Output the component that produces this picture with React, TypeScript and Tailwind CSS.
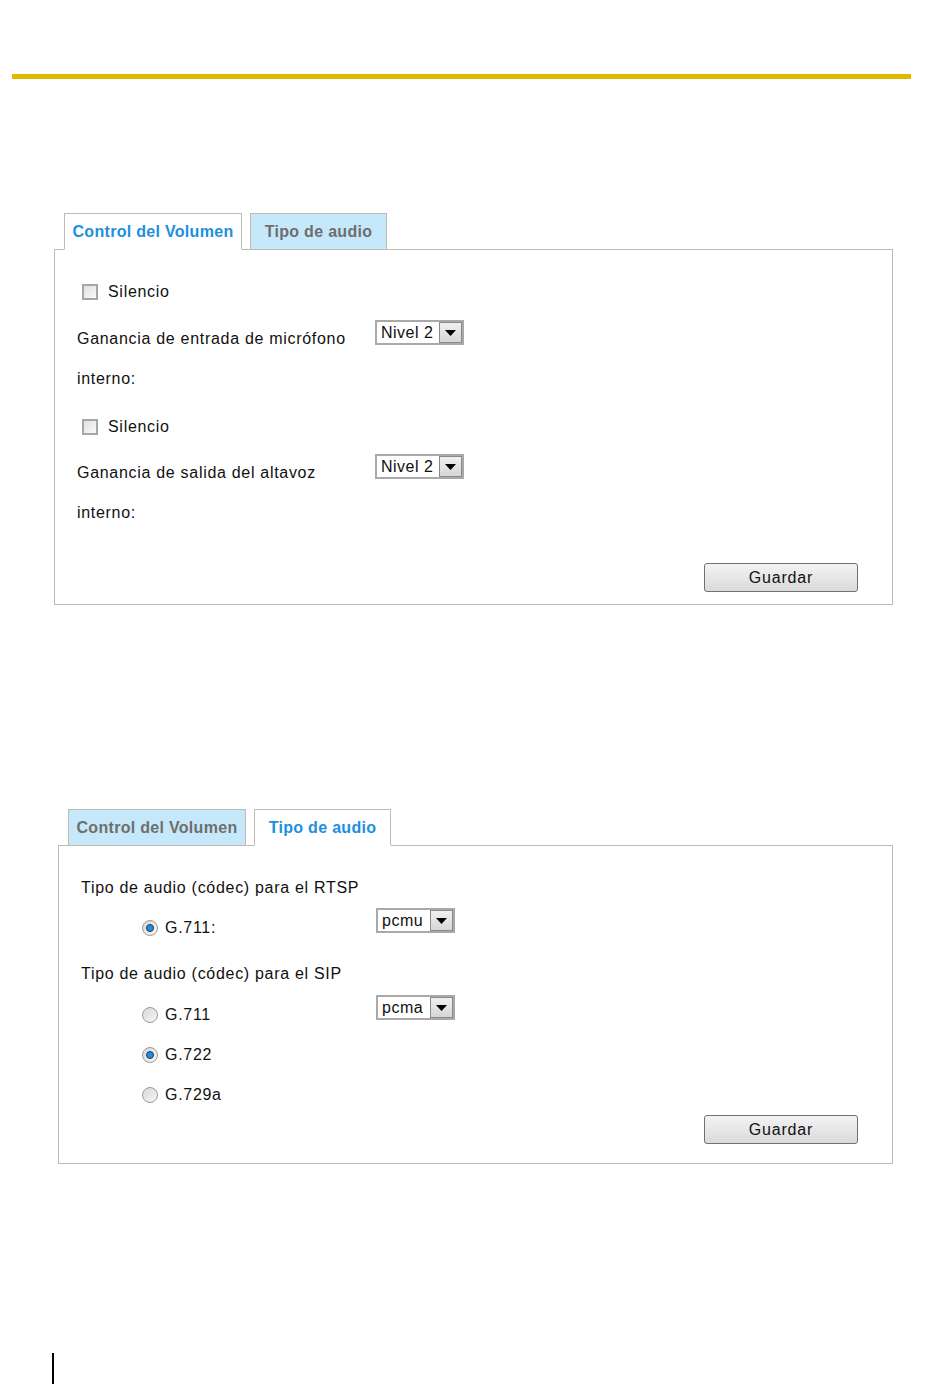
import React from 'react'

const font = { fontFamily: '"Liberation Sans", Arial, sans-serif' }

function Tabs({ active }: { active: 0 | 1 }) {
  const labels = ['Control del Volumen', 'Tipo de audio']
  const widths = [178, 137]
  return (
    <div className="relative z-10 -mb-px flex gap-[8px] pl-[10px]">
      {labels.map((label, i) => (
        <div
          key={label}
          style={{ width: widths[i] }}
          className={
            'flex h-[37px] items-center justify-center border border-[#bfbbb1] text-[16px] font-bold tracking-[0.3px] ' +
            (i === active
              ? 'border-b-white bg-white text-[#1c8fe0]'
              : 'border-b-[#bfbbb1] bg-[#c5e9fb] text-[#6e6e6e]')
          }
        >
          {label}
        </div>
      ))}
    </div>
  )
}

function Checkbox() {
  return (
    <span className="inline-block h-[16px] w-[16px] border-2 border-[#a6a6a6] bg-gradient-to-br from-[#e0e0e0] to-[#fafafa]" />
  )
}

function Radio({ checked }: { checked?: boolean }) {
  return (
    <span className="flex h-[16px] w-[16px] items-center justify-center rounded-full border border-[#9a9a9a] bg-gradient-to-br from-[#d6d6d6] to-[#f8f8f8]">
      {checked && (
        <span className="h-[8px] w-[8px] rounded-full border border-[#1d3c5c] bg-[#2a8ad8]" />
      )}
    </span>
  )
}

function Select({ value, width }: { value: string; width: number }) {
  return (
    <div
      style={{ width }}
      className="flex h-[25px] items-stretch border-2 border-[#a9a9a9] bg-white"
    >
      <span className="flex flex-1 items-center pl-[4px] text-[16px] leading-none tracking-[0.5px] text-[#111]">
        {value}
      </span>
      <span className="flex w-[23px] items-center justify-center border border-[#8a8a8a] bg-gradient-to-b from-[#f0f0f0] to-[#d6d6d6]">
        <svg width="11" height="6" viewBox="0 0 11 6">
          <path d="M0 0 H11 L5.5 6 Z" fill="#000" />
        </svg>
      </span>
    </div>
  )
}

function SaveButton() {
  return (
    <div className="flex justify-end pr-[12px]">
      <button className="h-[29px] w-[154px] rounded-[3px] border border-[#707070] bg-gradient-to-b from-[#f3f3f3] to-[#dadada] text-[16px] tracking-[0.8px] text-[#111]">
        Guardar
      </button>
    </div>
  )
}

export default function App() {
  return (
    <div
      className="relative h-[1397px] w-[950px] bg-white text-[16px] tracking-[0.7px] text-[#111]"
      style={font}
    >
      <div className="pt-[74px]">
        <div className="ml-[12px] h-[5px] w-[899px] bg-[#dfb900]" />
      </div>

      {/* Volume control */}
      <div className="ml-[54px] mt-[134px] w-[839px]">
        <Tabs active={0} />
        <div className="border border-[#bfbbb1] px-[22px] pb-[12px] pt-[22px]">
          <div className="flex h-10 items-center pl-[5px]">
            <Checkbox />
            <span className="ml-[10px]">Silencio</span>
          </div>
          <div className="mt-[7px] flex">
            <div className="w-[298px] leading-[40px]">
              Ganancia de entrada de micrófono
              <br />
              interno:
            </div>
            <div className="mt-px">
              <Select value="Nivel 2" width={89} />
            </div>
          </div>
          <div className="mt-[8px] flex h-10 items-center pl-[5px]">
            <Checkbox />
            <span className="ml-[10px]">Silencio</span>
          </div>
          <div className="mt-[6px] flex">
            <div className="w-[298px] leading-[40px]">
              Ganancia de salida del altavoz
              <br />
              interno:
            </div>
            <div className="mt-px">
              <Select value="Nivel 2" width={89} />
            </div>
          </div>
          <div className="mt-[30px]">
            <SaveButton />
          </div>
        </div>
      </div>

      {/* Audio type */}
      <div className="ml-[58px] mt-[204px] w-[835px]">
        <Tabs active={1} />
        <div className="border border-[#bfbbb1] px-[22px] pb-[19px] pt-[22px]">
          <div className="leading-[40px]">Tipo de audio (códec) para el RTSP</div>
          <div className="flex h-10">
            <div className="flex w-[295px] items-center pl-[61px]">
              <Radio checked />
              <span className="ml-[7px]">G.711:</span>
            </div>
            <div>
              <Select value="pcmu" width={79} />
            </div>
          </div>
          <div className="mt-[6px] leading-[40px]">Tipo de audio (códec) para el SIP</div>
          <div className="mt-px flex h-10">
            <div className="flex w-[295px] items-center pl-[61px]">
              <Radio />
              <span className="ml-[7px]">G.711</span>
            </div>
            <div>
              <Select value="pcma" width={79} />
            </div>
          </div>
          <div className="flex h-10 items-center pl-[61px]">
            <Radio checked />
            <span className="ml-[7px]">G.722</span>
          </div>
          <div className="flex h-10 items-center pl-[61px]">
            <Radio />
            <span className="ml-[7px]">G.729a</span>
          </div>
          <SaveButton />
        </div>
      </div>

      <div className="ml-[52px] mt-[189px] h-[31px] w-[2px] bg-black" />
    </div>
  )
}
